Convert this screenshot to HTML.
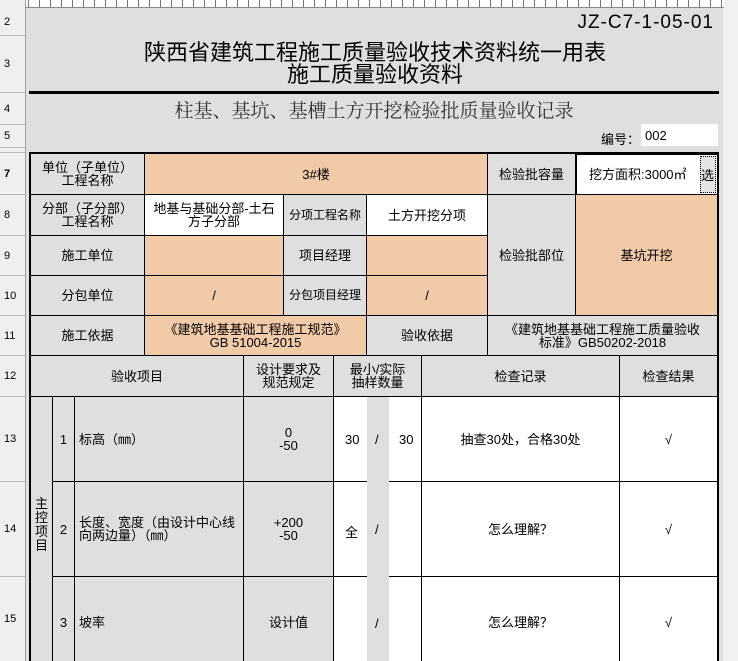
<!DOCTYPE html>
<html><head><meta charset="utf-8"><style>
*{margin:0;padding:0;box-sizing:border-box}
html,body{width:738px;height:661px;overflow:hidden}
body{background:#f0f0f0;position:relative;font-family:"Liberation Sans","Noto Sans CJK SC",sans-serif;font-size:13px;color:#000}
.a{position:absolute}
.c{position:absolute;display:flex;align-items:center;justify-content:center;text-align:center;line-height:13px;border-right:1px solid #000;border-bottom:1px solid #000;background:#dfdfdf}
.p{background:#f1caa7}.w{background:#fff}
.nb{border-bottom:0}
.rh{position:absolute;left:0;width:25px;border-bottom:1px solid #b8b8b8;background:#efefef;font-size:11px;display:flex;align-items:center;padding-left:4px;color:#000}
</style></head><body>
<div class="a" style="left:26px;top:8px;width:697px;height:653px;background:#dfdfdf"></div>
<div class="a" style="left:0;top:0;width:724px;height:8px;background:#fff;border-bottom:1px solid #888;background-image:repeating-linear-gradient(90deg,#777 0 1px,#fff 1px 11px);background-position:28px 0"></div>
<div class="a" style="left:0;top:0;width:26px;height:8px;background:#efefef;border-right:1px solid #999"></div>
<div class="a" style="left:25px;top:8px;width:1px;height:653px;background:#a0a0a0"></div>
<div class="rh" style="top:8px;height:28px">2</div>
<div class="rh" style="top:36px;height:57px">3</div>
<div class="rh" style="top:93px;height:32px">4</div>
<div class="rh" style="top:125px;height:23px">5</div>
<div class="rh" style="top:148px;height:5px"></div>
<div class="rh" style="top:153px;height:42px;font-weight:bold">7</div>
<div class="rh" style="top:195px;height:41px">8</div>
<div class="rh" style="top:236px;height:40px">9</div>
<div class="rh" style="top:276px;height:40px">10</div>
<div class="rh" style="top:316px;height:40px">11</div>
<div class="rh" style="top:356px;height:41px">12</div>
<div class="rh" style="top:397px;height:85px">13</div>
<div class="rh" style="top:482px;height:95px">14</div>
<div class="rh" style="top:577px;height:84px;border-bottom:0">15</div>

<div class="a" style="right:24px;top:12px;font-size:19px;letter-spacing:1px">JZ-C7-1-05-01</div>
<div class="a" style="left:80px;width:590px;top:42px;text-align:center;font-size:22px;line-height:22px">陕西省建筑工程施工质量验收技术资料统一用表<br>施工质量验收资料</div>
<div class="a" style="left:29px;top:91px;width:690px;height:3px;background:#000"></div>
<div class="a" style="left:29px;width:690px;top:96px;text-align:center;font-size:19px;color:#333;font-family:'Liberation Serif','Noto Serif CJK SC',serif">柱基、基坑、基槽土方开挖检验批质量验收记录</div>
<div class="a" style="left:601px;top:129px;font-size:13px">编号：</div>
<div class="a w" style="left:641px;top:124px;width:77px;height:22px;padding:4px 0 0 4px;background:#fff">002</div>

<div class="a" style="left:29px;top:152px;width:690px;height:509px;border-left:2px solid #000;border-top:2px solid #000;border-right:2px solid #000"></div>
<div class="c" style="left:31px;top:154px;width:114px;height:41px">单位（子单位）<br>工程名称</div>
<div class="c p" style="left:145px;top:154px;width:343px;height:41px">3#楼</div>
<div class="c" style="left:488px;top:154px;width:88px;height:41px">检验批容量</div>
<div class="c w" style="left:576px;top:154px;width:142px;height:41px;border:1px solid #000;justify-content:flex-start;padding-left:12px">挖方面积:3000㎡</div>
<div class="a" style="left:700px;top:156px;width:16px;height:37px;background:#e4e4e4;border:1px dotted #000;display:flex;align-items:center">选</div>
<div class="c" style="left:31px;top:195px;width:114px;height:41px">分部（子分部）<br>工程名称</div>
<div class="c w" style="left:145px;top:195px;width:139px;height:41px">地基与基础分部-土石<br>方子分部</div>
<div class="c" style="left:284px;top:195px;width:83px;height:41px;font-size:12px">分项工程名称</div>
<div class="c w" style="left:367px;top:195px;width:121px;height:41px">土方开挖分项</div>
<div class="c" style="left:488px;top:195px;width:88px;height:121px">检验批部位</div>
<div class="c p" style="left:576px;top:195px;width:142px;height:121px">基坑开挖</div>
<div class="c" style="left:31px;top:236px;width:114px;height:40px">施工单位</div>
<div class="c p" style="left:145px;top:236px;width:139px;height:40px"></div>
<div class="c" style="left:284px;top:236px;width:83px;height:40px">项目经理</div>
<div class="c p" style="left:367px;top:236px;width:121px;height:40px"></div>
<div class="c" style="left:31px;top:276px;width:114px;height:40px">分包单位</div>
<div class="c p" style="left:145px;top:276px;width:139px;height:40px">/</div>
<div class="c" style="left:284px;top:276px;width:83px;height:40px;font-size:12px">分包项目经理</div>
<div class="c p" style="left:367px;top:276px;width:121px;height:40px">/</div>
<div class="c" style="left:31px;top:316px;width:114px;height:40px">施工依据</div>
<div class="c p" style="left:145px;top:316px;width:222px;height:40px">《建筑地基基础工程施工规范》<br>GB 51004-2015</div>
<div class="c" style="left:367px;top:316px;width:121px;height:40px">验收依据</div>
<div class="c" style="left:488px;top:316px;width:230px;height:40px">《建筑地基基础工程施工质量验收<br>标准》GB50202-2018</div>
<div class="c" style="left:31px;top:356px;width:213px;height:41px">验收项目</div>
<div class="c" style="left:244px;top:356px;width:90px;height:41px">设计要求及<br>规范规定</div>
<div class="c" style="left:334px;top:356px;width:88px;height:41px">最小/实际<br>抽样数量</div>
<div class="c" style="left:422px;top:356px;width:198px;height:41px">检查记录</div>
<div class="c" style="left:620px;top:356px;width:98px;height:41px">检查结果</div>
<div class="c nb" style="left:31px;top:397px;width:22px;height:264px;line-height:14px;align-items:flex-start;padding-top:100px">主<br>控<br>项<br>目</div>
<div class="c" style="left:53px;top:397px;width:22px;height:85px">1</div>
<div class="c" style="left:75px;top:397px;width:169px;height:85px;justify-content:flex-start;text-align:left;padding-left:4px">标高（㎜）</div>
<div class="c" style="left:244px;top:397px;width:90px;height:85px">0<br>-50</div>
<div class="c w" style="left:334px;top:397px;width:88px;height:85px"></div>
<div class="c w" style="left:422px;top:397px;width:198px;height:85px">抽查30处，合格30处</div>
<div class="c w" style="left:620px;top:397px;width:98px;height:85px">√</div>
<div class="c" style="left:53px;top:482px;width:22px;height:95px">2</div>
<div class="c" style="left:75px;top:482px;width:169px;height:95px;justify-content:flex-start;text-align:left;padding-left:4px">长度、宽度（由设计中心线<br>向两边量）（㎜）</div>
<div class="c" style="left:244px;top:482px;width:90px;height:95px">+200<br>-50</div>
<div class="c w" style="left:334px;top:482px;width:88px;height:95px"></div>
<div class="c w" style="left:422px;top:482px;width:198px;height:95px">怎么理解？</div>
<div class="c w" style="left:620px;top:482px;width:98px;height:95px">√</div>
<div class="c nb" style="left:53px;top:577px;width:22px;height:84px;align-items:flex-start;padding-top:39px">3</div>
<div class="c nb" style="left:75px;top:577px;width:169px;height:84px;justify-content:flex-start;align-items:flex-start;padding:39px 0 0 4px">坡率</div>
<div class="c nb" style="left:244px;top:577px;width:90px;height:84px;align-items:flex-start;padding-top:39px">设计值</div>
<div class="c w nb" style="left:334px;top:577px;width:88px;height:84px"></div>
<div class="c w nb" style="left:422px;top:577px;width:198px;height:84px;align-items:flex-start;padding-top:39px">怎么理解？</div>
<div class="c w nb" style="left:620px;top:577px;width:98px;height:84px;align-items:flex-start;padding-top:39px">√</div>
<div class="a" style="left:367px;top:397px;width:22px;height:264px;background:#dfdfdf"></div>
<div class="a" style="left:345px;top:432px">30</div>
<div class="a" style="left:375px;top:432px">/</div>
<div class="a" style="left:399px;top:432px">30</div>
<div class="a" style="left:345px;top:522px">全</div>
<div class="a" style="left:375px;top:522px">/</div>
<div class="a" style="left:375px;top:616px">/</div>
</body></html>
